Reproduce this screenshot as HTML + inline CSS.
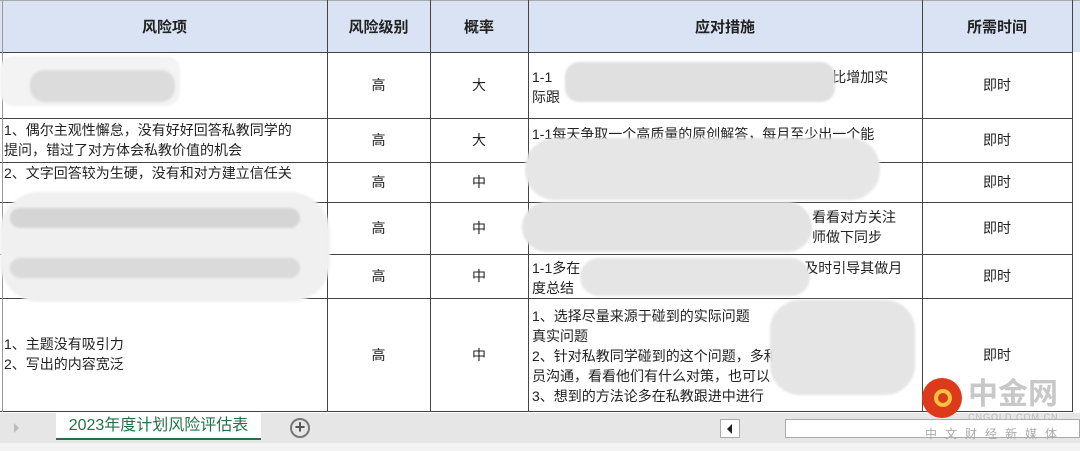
<!DOCTYPE html><html><head><meta charset="utf-8"><style>
*{margin:0;padding:0;box-sizing:border-box}
body{width:1080px;height:451px;overflow:hidden;background:#fff;position:relative;font-family:"Liberation Sans","Noto Sans CJK SC",sans-serif;font-size:14px;color:#222}
.a{position:absolute}
.hl{position:absolute;height:1px;background:#444}
.vl{position:absolute;width:1px;background:#444}
.c{position:absolute;display:flex;align-items:center;justify-content:center;text-align:center}
.t{position:absolute;line-height:20px;white-space:nowrap}
.b{position:absolute;background:#d9d9d9;border-radius:14px;filter:blur(1px)}
</style></head><body>
<div class="a" style="left:0;top:0;width:1080px;height:52px;background:#dae3f3"></div>
<div class="hl" style="left:0;top:0;width:1080px;background:#aaa"></div>
<div class="hl" style="left:0;top:52px;width:1072px"></div>
<div class="hl" style="left:0;top:118px;width:1072px"></div>
<div class="hl" style="left:0;top:162px;width:1072px"></div>
<div class="hl" style="left:0;top:202px;width:1072px"></div>
<div class="hl" style="left:0;top:254px;width:1072px"></div>
<div class="hl" style="left:0;top:298px;width:1072px"></div>
<div class="hl" style="left:0;top:411px;width:1072px"></div>
<div class="vl" style="left:2px;top:0;height:412px;background:#999"></div>
<div class="vl" style="left:327px;top:0;height:412px"></div>
<div class="vl" style="left:430px;top:0;height:412px"></div>
<div class="vl" style="left:528px;top:0;height:412px"></div>
<div class="vl" style="left:922px;top:0;height:412px"></div>
<div class="vl" style="left:1072px;top:0;height:412px"></div>
<div class="c" style="left:2px;top:0;width:325px;height:52px;font-weight:bold;font-size:15px">风险项</div>
<div class="c" style="left:327px;top:0;width:103px;height:52px;font-weight:bold;font-size:15px">风险级别</div>
<div class="c" style="left:430px;top:0;width:98px;height:52px;font-weight:bold;font-size:15px">概率</div>
<div class="c" style="left:528px;top:0;width:394px;height:52px;font-weight:bold;font-size:15px">应对措施</div>
<div class="c" style="left:922px;top:0;width:150px;height:52px;font-weight:bold;font-size:15px">所需时间</div>
<div class="c" style="left:327px;top:52px;width:103px;height:66px">高</div><div class="c" style="left:430px;top:52px;width:98px;height:66px">大</div><div class="c" style="left:922px;top:52px;width:150px;height:66px">即时</div>
<div class="c" style="left:327px;top:118px;width:103px;height:44px">高</div><div class="c" style="left:430px;top:118px;width:98px;height:44px">大</div><div class="c" style="left:922px;top:118px;width:150px;height:44px">即时</div>
<div class="c" style="left:327px;top:162px;width:103px;height:40px">高</div><div class="c" style="left:430px;top:162px;width:98px;height:40px">中</div><div class="c" style="left:922px;top:162px;width:150px;height:40px">即时</div>
<div class="c" style="left:327px;top:202px;width:103px;height:52px">高</div><div class="c" style="left:430px;top:202px;width:98px;height:52px">中</div><div class="c" style="left:922px;top:202px;width:150px;height:52px">即时</div>
<div class="c" style="left:327px;top:254px;width:103px;height:44px">高</div><div class="c" style="left:430px;top:254px;width:98px;height:44px">中</div><div class="c" style="left:922px;top:254px;width:150px;height:44px">即时</div>
<div class="c" style="left:327px;top:298px;width:103px;height:113px">高</div><div class="c" style="left:430px;top:298px;width:98px;height:113px">中</div><div class="c" style="left:922px;top:298px;width:150px;height:113px">即时</div>
<div class="t" style="left:4px;top:120px">1、偶尔主观性懈怠，没有好好回答私教同学的<br>提问，错过了对方体会私教价值的机会</div>
<div class="t" style="left:4px;top:163px">2、文字回答较为生硬，没有和对方建立信任关</div>
<div class="t" style="left:4px;top:334px">1、主题没有吸引力<br>2、写出的内容宽泛</div>
<div class="t" style="left:532px;top:67px">1-1　　　　　　　　　　　　　　　　　　　　比增加实<br>际跟</div>
<div class="t" style="left:532px;top:124px">1-1每天争取一个高质量的原创解答，每月至少出一个能</div>
<div class="t" style="left:532px;top:207px">　　　　　　　　　　　　　　　　　　　　看看对方关注<br>　　　　　　　　　　　　　　　　　　　　师做下同步</div>
<div class="t" style="left:532px;top:258px">1-1多在　　　　　　　　　　　　　　　　及时引导其做月<br>度总结</div>
<div class="t" style="left:532px;top:306px">1、选择尽量来源于碰到的实际问题<br>真实问题<br>2、针对私教同学碰到的这个问题，多和<br>员沟通，看看他们有什么对策，也可以<br>3、想到的方法论多在私教跟进中进行</div>
<div class="b" style="left:0;top:56px;width:180px;height:50px;background:#f3f3f3"></div>
<div class="b" style="left:30px;top:70px;width:145px;height:32px;background:#dcdcdc"></div>
<div class="b" style="left:0;top:192px;width:330px;height:110px;background:#f0f0f0;border-radius:40px"></div>
<div class="b" style="left:10px;top:208px;width:290px;height:20px;background:#d5d5d5"></div>
<div class="b" style="left:10px;top:258px;width:290px;height:20px;background:#dadada"></div>
<div class="b" style="left:565px;top:62px;width:270px;height:40px;background:#e0e0e0"></div>
<div class="b" style="left:525px;top:138px;width:355px;height:62px;background:#e6e6e6;border-radius:30px"></div>
<div class="b" style="left:522px;top:202px;width:290px;height:50px;background:#e3e3e3;border-radius:25px"></div>
<div class="b" style="left:580px;top:258px;width:230px;height:38px;background:#e5e5e5;border-radius:20px"></div>
<div class="b" style="left:770px;top:300px;width:145px;height:95px;background:#e5e5e5;border-radius:30px"></div>
<div class="a" style="left:0;top:413px;width:1080px;height:30px;background:#e6e6e6"></div>
<div class="a" style="left:0;top:443px;width:1080px;height:8px;background:#f3f3f3"></div>
<div class="a" style="left:14px;top:423px;width:0;height:0;border-left:5px solid #bbb;border-top:5px solid transparent;border-bottom:5px solid transparent"></div>
<div class="a" style="left:56px;top:413px;width:205px;height:27px;background:#fff;border-bottom:2px solid #217346;color:#217346;font-size:16px;text-align:center;line-height:26px">2023年度计划风险评估表</div>
<div class="a" style="left:290px;top:418px;width:20px;height:20px;border:2px solid #777;border-radius:50%;color:#555;font-size:18px;font-weight:bold;line-height:15px;text-align:center">+</div>
<div class="a" style="left:720px;top:419px;width:20px;height:19px;background:#fff;border:1px solid #aaa"></div>
<div class="a" style="left:727px;top:424px;width:0;height:0;border-right:5px solid #222;border-top:5px solid transparent;border-bottom:5px solid transparent"></div>
<div class="a" style="left:785px;top:419px;width:295px;height:19px;background:#fff;border:1px solid #aaa"></div>
<div class="a" style="left:922px;top:378px;width:40px;height:40px;border-radius:50%;background:#dd3a1c"></div>
<div class="a" style="left:934px;top:389px;width:18px;height:18px;border-radius:50%;border:4px solid #f6c040"></div>
<div class="a" style="left:968px;top:378px;font-size:30px;font-weight:bold;color:#c8c8c8;line-height:34px">中金网</div>
<div class="a" style="left:968px;top:412px;font-size:9px;color:#bbb;letter-spacing:1px">CNGOLD.COM.CN</div>
<div class="a" style="left:925px;top:425px;font-size:12px;color:#aaa;letter-spacing:8px">中文财经新媒体</div>
</body></html>
